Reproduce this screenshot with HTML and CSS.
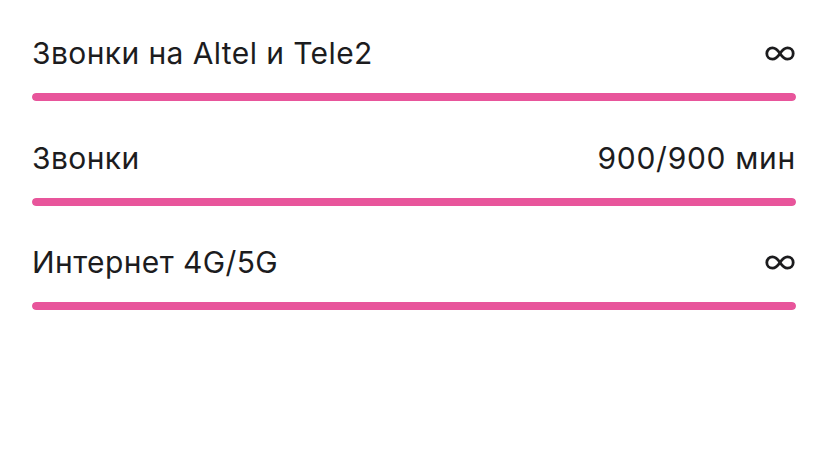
FILE: index.html
```html
<!DOCTYPE html>
<html lang="ru">
<head>
  <meta charset="UTF-8" />
  <meta name="viewport" content="width=device-width, initial-scale=1.0" />
  <title>Пакет</title>
  <link rel="stylesheet" href="styles.css">
</head>
<body>
  <div class="list">
    <div class="item">
      <div class="row">
        <span class="name">Звонки на Altel и Tele2</span>
        <svg class="inf" width="30" height="15" viewBox="0 0 30 15"><path d="M15 7.5 C12 3 10 1.8 7.5 1.8 C4.2 1.8 1.8 4.3 1.8 7.5 C1.8 10.7 4.2 13.2 7.5 13.2 C10 13.2 12 12 15 7.5 C18 3 20 1.8 22.5 1.8 C25.8 1.8 28.2 4.3 28.2 7.5 C28.2 10.7 25.8 13.2 22.5 13.2 C20 13.2 18 12 15 7.5 Z" fill="none" stroke="#1c1c1e" stroke-width="2.8"/></svg>
      </div>
      <div class="bar"><div class="fill" style="width: 100%;"></div></div>
    </div>

    <div class="item">
      <div class="row">
        <span class="name">Звонки</span>
        <span class="value">900/900 мин</span>
      </div>
      <div class="bar"><div class="fill" style="width: 100%;"></div></div>
    </div>

    <div class="item">
      <div class="row">
        <span class="name">Интернет 4G/5G</span>
        <svg class="inf" width="30" height="15" viewBox="0 0 30 15"><path d="M15 7.5 C12 3 10 1.8 7.5 1.8 C4.2 1.8 1.8 4.3 1.8 7.5 C1.8 10.7 4.2 13.2 7.5 13.2 C10 13.2 12 12 15 7.5 C18 3 20 1.8 22.5 1.8 C25.8 1.8 28.2 4.3 28.2 7.5 C28.2 10.7 25.8 13.2 22.5 13.2 C20 13.2 18 12 15 7.5 Z" fill="none" stroke="#1c1c1e" stroke-width="2.8"/></svg>
      </div>
      <div class="bar"><div class="fill" style="width: 100%;"></div></div>
    </div>
  </div>
</body>
</html>
```

FILE: styles.css
```css
body { margin: 0; background: #fff; font-family: Inter, "Noto Sans", sans-serif; color: #1c1c1e; }
.list { padding: 35px 32px 0 32px; display: flex; flex-direction: column; gap: 38.5px; }
.row { display: flex; justify-content: space-between; align-items: center; height: 36px; font-size: 30px; line-height: 36px; letter-spacing: 0.4px; }
.value { letter-spacing: 0.7px; }
.inf { margin-right: 1px; }
.bar { margin-top: 22px; height: 8px; border-radius: 4px; background: #f1f1f3; overflow: hidden; }
.fill { height: 100%; background: #e8559b; border-radius: 4px; }
```
